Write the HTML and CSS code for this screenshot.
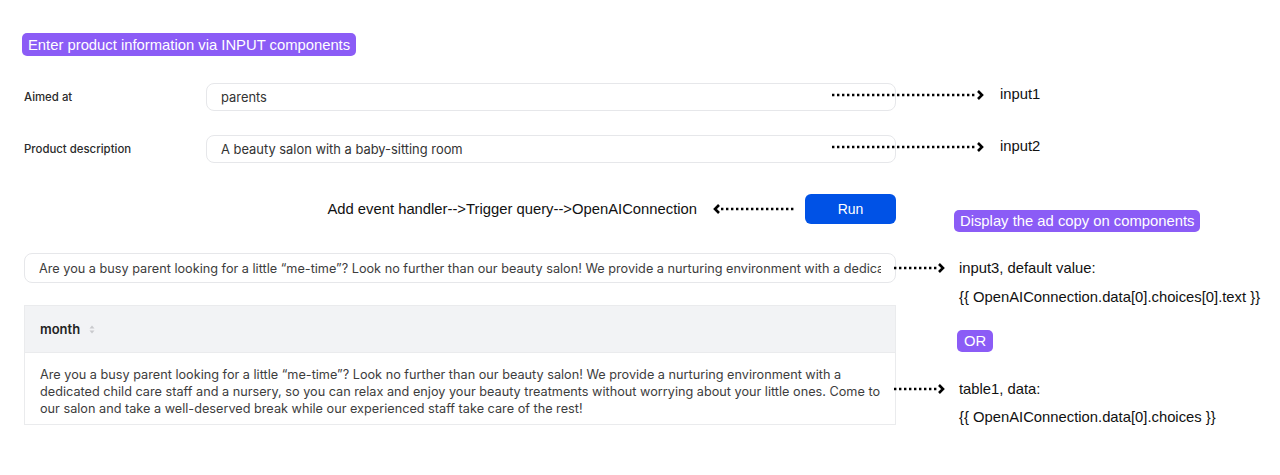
FILE: index.html
```html
<!DOCTYPE html>
<html>
<head>
<meta charset="utf-8">
<link rel="stylesheet" href="styles.css">
</head>
<body>
<div class="page">
  <div class="badge badge-top">Enter product information via INPUT components</div>

  <div class="form-row row-first">
    <div class="label">Aimed at</div>
    <div class="field"><span class="field-text">parents</span></div>
    <svg class="arrow arrow-long" width="153" height="12" viewBox="0 0 153 12"><line x1="1" y1="6" x2="146" y2="6" stroke="#000" stroke-width="2.6" stroke-dasharray="2.4 2.6"/><polyline points="147,2 151,6 147,10" fill="none" stroke="#000" stroke-width="2.6"/></svg>
    <div class="note">input1</div>
  </div>

  <div class="form-row row-second">
    <div class="label">Product description</div>
    <div class="field"><span class="field-text">A beauty salon with a baby-sitting room</span></div>
    <svg class="arrow arrow-long" width="153" height="12" viewBox="0 0 153 12"><line x1="1" y1="6" x2="146" y2="6" stroke="#000" stroke-width="2.6" stroke-dasharray="2.4 2.6"/><polyline points="147,2 151,6 147,10" fill="none" stroke="#000" stroke-width="2.6"/></svg>
    <div class="note">input2</div>
  </div>

  <div class="action-row">
    <div class="action-left">
      <div class="flow-text">Add event handler--&gt;Trigger query--&gt;OpenAIConnection</div>
      <svg class="arrow arrow-back" width="82" height="12" viewBox="0 0 82 12"><polyline points="6,2 2,6 6,10" fill="none" stroke="#000" stroke-width="2.6"/><line x1="8" y1="6" x2="82" y2="6" stroke="#000" stroke-width="2.6" stroke-dasharray="2.4 2.6"/></svg>
      <button class="run-btn">Run</button>
    </div>
    <div class="badge badge-display">Display the ad copy on components</div>
  </div>

  <div class="output-section">
    <div class="output-left">
      <div class="field field-wide"><span class="field-text">Are you a busy parent looking for a little “me-time”? Look no further than our beauty salon! We provide a nurturing environment with a dedicated child care staff and a nursery, so you can relax and enjoy your beauty treatments without worrying about your little ones. Come to our salon and take a well-deserved break while our experienced staff take care of the rest!</span></div>
      <div class="table">
        <div class="table-head">
          <span class="col-name">month</span>
          <svg class="sort" width="6" height="9" viewBox="0 0 6 9"><polygon points="3,0.5 5.5,3.5 0.5,3.5" fill="#c9cacd"/><polygon points="3,8.5 5.5,5.5 0.5,5.5" fill="#c9cacd"/></svg>
        </div>
        <div class="table-body">Are you a busy parent looking for a little “me-time”? Look no further than our beauty salon! We provide a nurturing environment with a dedicated child care staff and a nursery, so you can relax and enjoy your beauty treatments without worrying about your little ones. Come to our salon and take a well-deserved break while our experienced staff take care of the rest!</div>
      </div>
    </div>
    <div class="output-notes">
      <div class="note-row">
        <svg class="arrow arrow-short" width="52" height="12" viewBox="0 0 52 12"><line x1="1" y1="6" x2="45" y2="6" stroke="#000" stroke-width="2.6" stroke-dasharray="2.4 2.6"/><polyline points="46,2 50,6 46,10" fill="none" stroke="#000" stroke-width="2.6"/></svg>
        <div class="note">input3, default value:</div>
      </div>
      <div class="note note-line">{{ OpenAIConnection.data[0].choices[0].text }}</div>
      <div class="badge badge-or">OR</div>
      <div class="note-row note-row-table">
        <svg class="arrow arrow-short" width="52" height="12" viewBox="0 0 52 12"><line x1="1" y1="6" x2="45" y2="6" stroke="#000" stroke-width="2.6" stroke-dasharray="2.4 2.6"/><polyline points="46,2 50,6 46,10" fill="none" stroke="#000" stroke-width="2.6"/></svg>
        <div class="note">table1, data:</div>
      </div>
      <div class="note note-line">{{ OpenAIConnection.data[0].choices }}</div>
    </div>
  </div>
</div>
</body>
</html>
```

FILE: styles.css
```css
* { box-sizing: border-box; }
html, body { margin: 0; padding: 0; background: #fff; }
body { font-family: Inter, "Noto Sans", sans-serif; color: #333; }

.page {
  padding: 33px 0 0 24px;
  width: 1280px;
  height: 475px;
  overflow: hidden;
}

.badge {
  display: inline-flex;
  align-items: center;
  background: #8b5cf6;
  color: #fff;
  font-family: "Liberation Sans", Arial, sans-serif;
  font-size: 14.8px;
  border-radius: 5px;
  height: 23px;
  padding: 0 6px;
  white-space: nowrap;
}
.badge-top { margin-left: -2px; }

.form-row {
  display: flex;
  align-items: center;
  height: 28px;
}
.row-first { margin-top: 27px; }
.row-second { margin-top: 24px; }

.label {
  width: 182px;
  flex: none;
  font-size: 11.4px;
  font-weight: 500;
  color: #2b2b2b;
}

.field {
  width: 690px;
  flex: none;
  height: 28px;
  border: 1px solid #e6e7ea;
  border-radius: 8px;
  padding: 0 14px;
  display: flex;
  align-items: center;
  font-size: 12.9px;
  color: #333;
}
.field-text {
  display: block;
  width: 100%;
  white-space: nowrap;
  overflow: hidden;
}

.arrow { display: block; flex: none; position: relative; }
.arrow-long { margin-left: -65px; top: -2px; }
.note {
  font-family: "Liberation Sans", Arial, sans-serif;
  font-size: 14.8px;
  color: #111;
  white-space: nowrap;
}
.form-row .note { margin-left: 16px; position: relative; top: -3px; }

.action-row {
  display: flex;
  margin-top: 31px;
  height: 38px;
}
.action-left {
  width: 872px;
  flex: none;
  height: 30px;
  display: flex;
  align-items: center;
  justify-content: flex-end;
}
.flow-text {
  font-family: "Liberation Sans", Arial, sans-serif;
  font-size: 14.8px;
  color: #111;
}
.arrow-back { margin-left: 16px; }
.run-btn {
  margin-left: 10px;
  width: 91px;
  height: 30px;
  border: none;
  border-radius: 6px;
  background: #0052e6;
  color: #fff;
  font-family: "Liberation Sans", Arial, sans-serif;
  font-size: 14px;
  padding: 0;
}
.badge-display {
  margin-left: 58px;
  margin-top: 16px;
  height: 22px;
}

.output-section {
  display: flex;
  margin-top: 21px;
}
.output-left { width: 872px; flex: none; }
.field-wide {
  width: 872px;
  height: 30px;
  font-size: 12.7px;
  color: #3d3d3d;
  padding: 0 14px;
}

.table {
  margin-top: 22px;
  border: 1px solid #eaebed;
}
.table-head {
  height: 47px;
  background: #f2f3f5;
  display: flex;
  align-items: center;
  padding-left: 15px;
  border-bottom: 1px solid #eaebed;
}
.col-name {
  font-size: 13px;
  font-weight: 600;
  color: #222;
}
.sort { margin-left: 9px; }
.table-body {
  height: 71px;
  padding: 13px 8px 7px 15px;
  font-size: 12.7px;
  line-height: 17px;
  color: #3d3d3d;
}

.output-notes {
  flex: none;
  display: flex;
  flex-direction: column;
  align-items: flex-start;
  margin-left: -3px;
}
.note-row {
  display: flex;
  align-items: center;
  height: 30px;
}
.note-row .note { margin-left: 14px; }
.note-line { line-height: 28px; margin-left: 66px; }
.badge-or {
  margin-top: 19px;
  margin-left: 64px;
  height: 22px;
  padding: 0 7px;
}
.note-row-table { margin-top: 23px; height: 28px; }
```
